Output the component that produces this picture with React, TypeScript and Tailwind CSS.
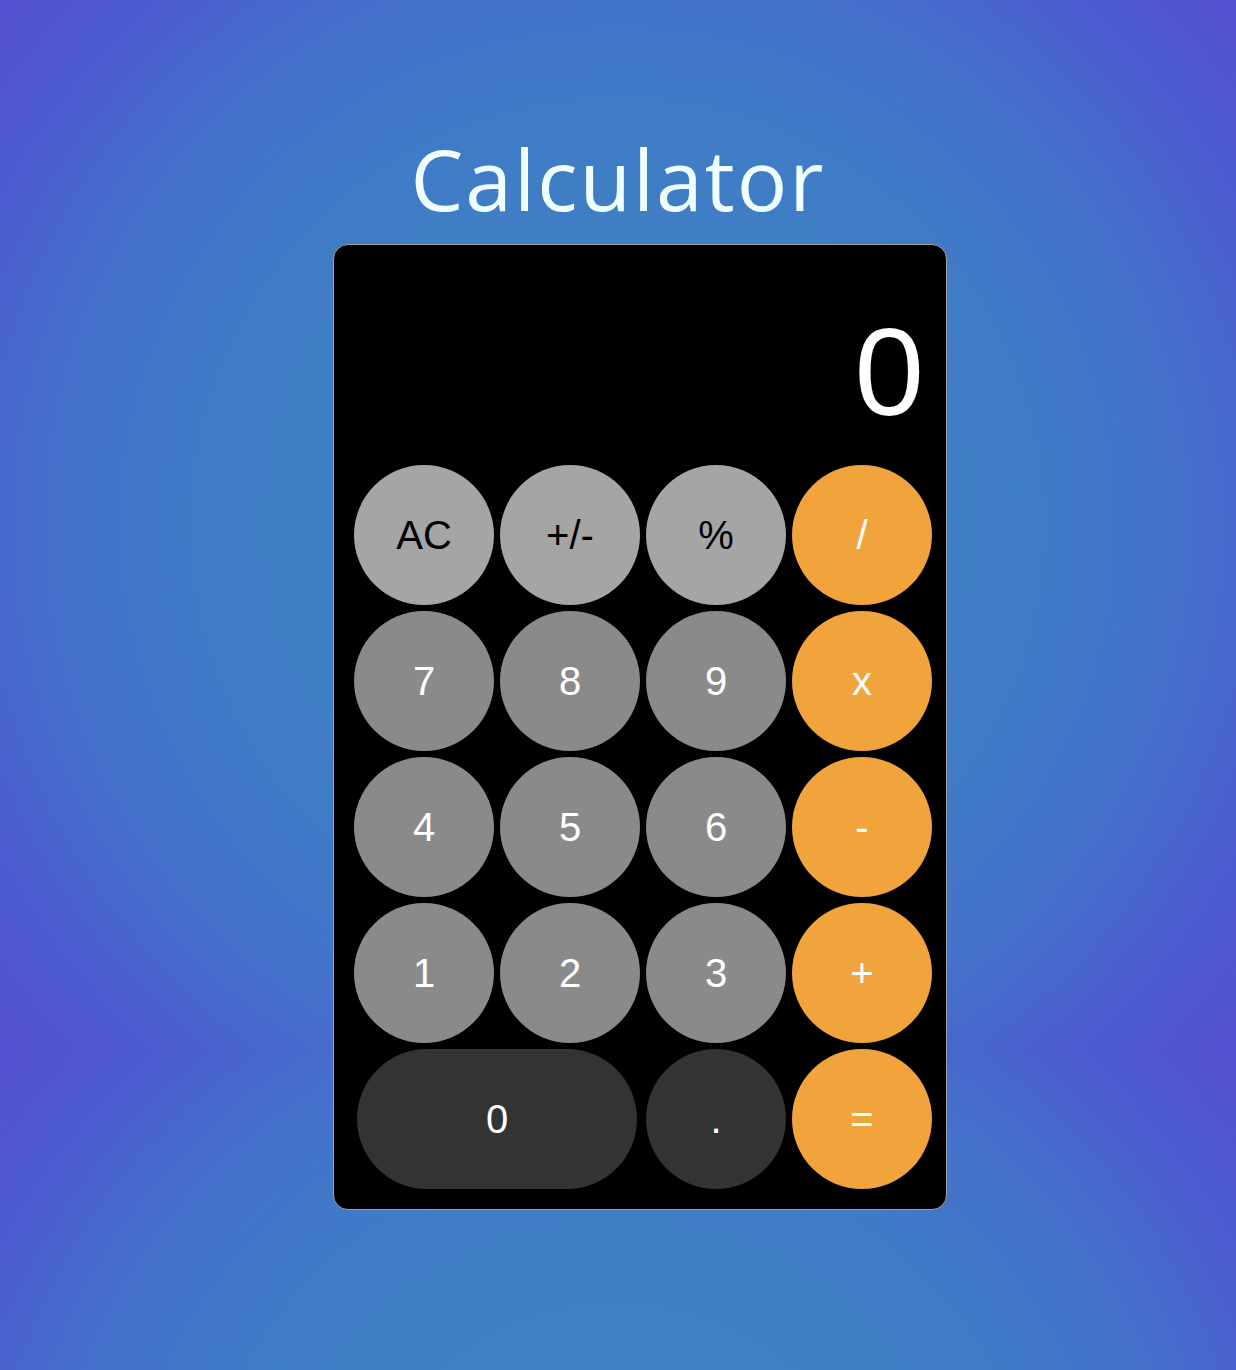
import React, { useState } from "react";

type Key = {
  label: string;
  kind: "fn" | "num" | "op" | "dark";
  wide?: boolean;
};

const keys: Key[] = [
  { label: "AC", kind: "fn" },
  { label: "+/-", kind: "fn" },
  { label: "%", kind: "fn" },
  { label: "/", kind: "op" },
  { label: "7", kind: "num" },
  { label: "8", kind: "num" },
  { label: "9", kind: "num" },
  { label: "x", kind: "op" },
  { label: "4", kind: "num" },
  { label: "5", kind: "num" },
  { label: "6", kind: "num" },
  { label: "-", kind: "op" },
  { label: "1", kind: "num" },
  { label: "2", kind: "num" },
  { label: "3", kind: "num" },
  { label: "+", kind: "op" },
  { label: "0", kind: "dark", wide: true },
  { label: ".", kind: "dark" },
  { label: "=", kind: "op" },
];

const kindClass: Record<Key["kind"], string> = {
  fn: "bg-[#a5a5a5] text-black",
  num: "bg-[#8a8a8a] text-white",
  op: "bg-[#f1a33c] text-white",
  dark: "bg-[#333333] text-white",
};

export default function App() {
  const [display, setDisplay] = useState("0");

  const press = (label: string) => {
    if (label === "AC") setDisplay("0");
    else if (/[0-9]/.test(label))
      setDisplay((d) => (d === "0" ? label : d + label));
  };

  return (
    <div className="min-h-[1370px] w-full bg-[radial-gradient(circle_at_center,#3f84c2_0%,#3f7cc6_50%,#4470cc_70%,#4c5ccf_85%,#5450d0_100%)] bg-size-[100%_1050px] bg-repeat flex flex-col items-center pt-[137px]">
      <h1 className="font-['Open_Sans',sans-serif] text-[84px] leading-[84px] tracking-[2px] text-[#f0ffff] font-normal mb-[23px]">
        Calculator
      </h1>

      {/* Calculator body */}
      <div className="ml-[44px] w-[614px] h-[966px] bg-black border border-[#a0a0a0] rounded-[15px] flex flex-col font-['Liberation_Sans',Arial,sans-serif]">
        <div className="h-[220px] flex items-end justify-end pr-[22px] pb-[31px]">
          <span className="text-white text-[125px] leading-[125px]">{display}</span>
        </div>

        <div className="grid grid-cols-[repeat(4,140px)] gap-[6px] pl-[20px] pr-[14px] pb-[20px]">
          {keys.map((k) => (
            <button
              key={k.label}
              onClick={() => press(k.label)}
              className={`${kindClass[k.kind]} h-[140px] rounded-full flex items-center justify-center text-[40px] leading-none ${
                k.wide ? "col-span-2 w-[280px] justify-self-center" : "w-[140px]"
              }`}
            >
              {k.label}
            </button>
          ))}
        </div>
      </div>
    </div>
  );
}
